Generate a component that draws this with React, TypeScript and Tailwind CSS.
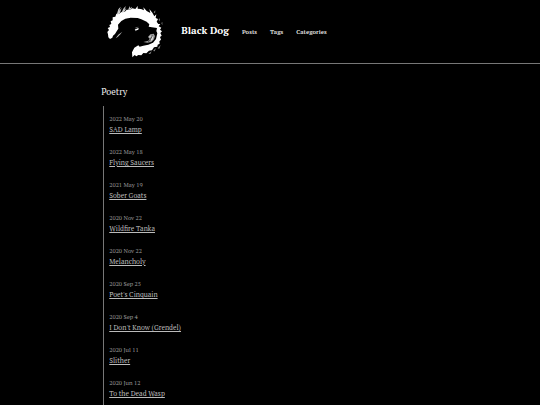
interface Post {
    date: string;
    title: string;
}

const posts: Post[] = [
    { date: '2022 May 20', title: 'SAD Lamp' },
    { date: '2022 May 18', title: 'Flying Saucers' },
    { date: '2021 May 19', title: 'Sober Goats' },
    { date: '2020 Nov 22', title: 'Wildfire Tanka' },
    { date: '2020 Nov 22', title: 'Melancholy' },
    { date: '2020 Sep 25', title: "Poet's Cinquain" },
    { date: '2020 Sep 4', title: "I Don't Know (Grendel)" },
    { date: '2020 Jul 11', title: 'Slither' },
    { date: '2020 Jun 12', title: 'To the Dead Wasp' },
];

const navItems = ['Posts', 'Tags', 'Categories'];

function Logo() {
    return (
        <svg viewBox="30 12 180 162" className="h-[54px] w-[60px]" fill="#fff" aria-hidden="true">
            {/* ring of flames around the head */}
            <path d="M45 117L40 112L39 103L37 96L42 90L38 84L45 81L43 75L49 72L47 64L53 61L53 52L61 50L64 41L72 42L79 36L89 36L95 29L106 29L112 25L121 27L128 18L128 26L138 27L147 31L145 22L155 33L166 39L163 27L172 38L178 49L184 43L182 54L189 57L185 65L190 72L196 72L191 79L199 83L195 89L201 94L196 99L200 107L195 111L198 119L193 124L194 131L188 134L187 140L177 142L171 151L162 152L154 160L145 159L139 166L130 165L124 169L119 165L112 172L111 157L118 143L130 136L134 140L145 137L160 134L174 128L183 117L187 100L184 93L186 84L161 80L163 73L155 65L139 58L128 54L107 53L91 56L79 63L69 74L70 86L65 94L60 102L54 107L52 113Z" />
            <path d="M65 44L70 28L77 20L73 32L80 24L74 41ZM79 38L86 25L93 18L88 29L94 24L88 36ZM99 29L105 18L105 25L111 20L108 29Z" fill="#ccc" />
            <path d="M62 115L70 104L82 95L76 103L69 110Z" fill="#bbb" />
            {/* eye and brow */}
            <path d="M119 87L125 86L131 83L130 89L125 91L120 94L122 90Z" />
            <path d="M119 84L126 81L131 80L126 84Z" fill="#777" />
            {/* open mouth */}
            <path d="M159 111L166 103L176 101L180 108L177 118L169 126L157 128L145 126L160 122L164 116Z" fill="#999" />
            <path d="M162 110L169 105L165 114ZM171 109L176 103L173 119L166 124Z" fill="#ddd" />
            <path d="M166 118L171 110M159 125L168 119M170 108L175 107" stroke="#222" strokeWidth="2" fill="none" />
            {/* sparks */}
            <path d="M176 37L181 31L180 40ZM191 59L195 54L194 64ZM199 69L202 66L202 76ZM188 145L197 135L193 146ZM174 153L183 144L179 154ZM160 161L170 154L166 162Z" fill="#888" />
        </svg>
    );
}

export default function App() {
    return (
        <div className="flex min-h-screen flex-col bg-black font-['PT_Serif','Liberation_Serif',serif] text-[#eee]">
            <header className="border-b border-[#777] pt-1 pb-[5px]">
                <div className="mx-auto flex w-5/8 items-center gap-4 px-1">
                    <a href="#home">
                        <Logo />
                    </a>
                    <nav className="flex items-baseline gap-[13px]">
                        <a href="#home" className="text-[10px] leading-4 font-bold text-white">
                            Black Dog
                        </a>
                        {navItems.map((item) => (
                            <a key={item} href={`#${item.toLowerCase()}`} className="text-[6px] leading-4 font-bold text-[#ddd]">
                                {item}
                            </a>
                        ))}
                    </nav>
                </div>
            </header>

            <main className="mx-auto flex w-5/8 grow flex-col pt-5">
                <h1 className="text-[9px] leading-4">Poetry</h1>
                <ul className="mt-[6px] ml-[2px] flex grow flex-col gap-3 border-l border-[#777] pt-2 pl-[5px]">
                    {posts.map((post) => (
                        <li key={post.title} className="flex flex-col items-start">
                            <time className="text-[6px] leading-[10px] text-[#999]">{post.date}</time>
                            <a href="#post" className="text-[7px] leading-[11px] text-[#bbb] underline">
                                {post.title}
                            </a>
                        </li>
                    ))}
                </ul>
            </main>
        </div>
    );
}
